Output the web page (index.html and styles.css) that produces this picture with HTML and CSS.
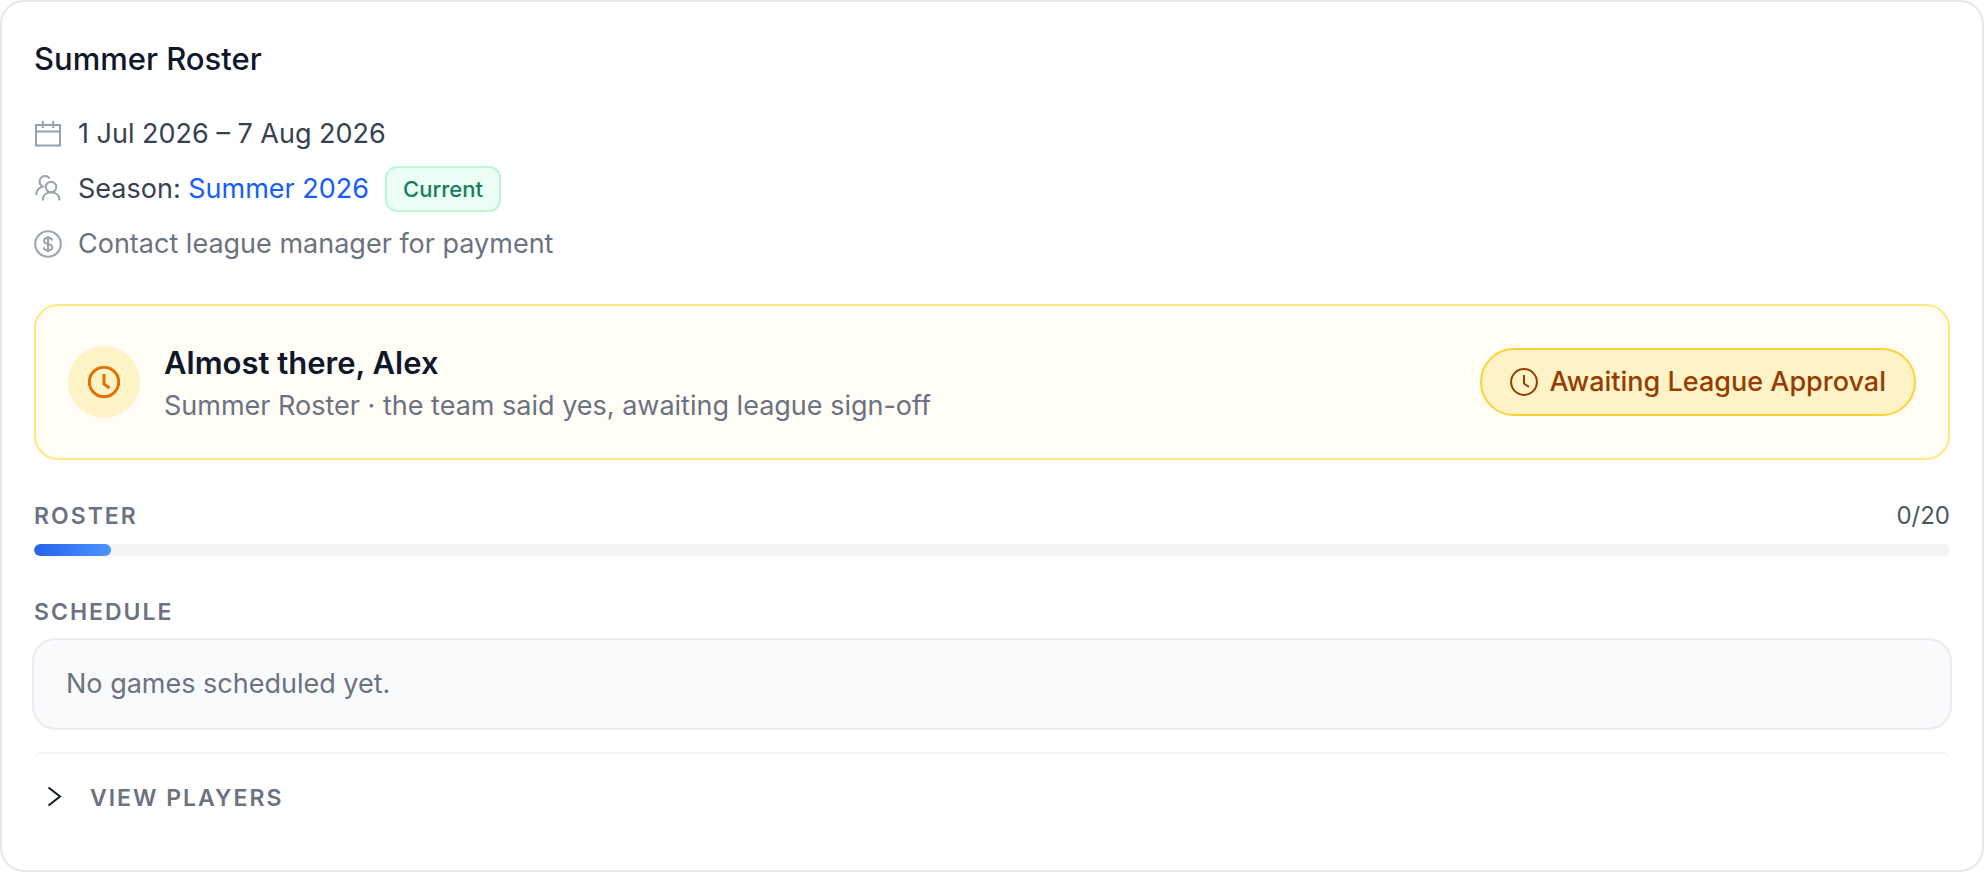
FILE: index.html
```html
<!DOCTYPE html>
<html lang="en">
<head>
<meta charset="utf-8">
<meta name="viewport" content="width=device-width, initial-scale=1">
<title>Summer Roster</title>
<link rel="stylesheet" href="styles.css">
</head>
<body>
<main class="card">
  <h1 class="card-title">Summer Roster</h1>

  <ul class="facts">
    <li class="fact">
      <svg class="fact-icon" viewBox="0 0 28 28" aria-hidden="true"><path d="M2 5H26V25.500H2ZM2 11.500H26M8.800 1V8M19.200 1V8"/></svg>
      <span>1 Jul 2026 – 7 Aug 2026</span>
    </li>
    <li class="fact">
      <svg class="fact-icon" viewBox="0 1 28 28" aria-hidden="true"><circle cx="17" cy="13" r="5.300"/><path d="M8.800 26.500C8.800 21.500 12 18.300 17 18.300S25.500 21.500 25.500 26.500M15.500 4.500C14.500 2.800 12.800 2 10.800 2C7.800 2 5.600 4.500 5.600 7.500C5.600 9.700 6.600 11.500 8.600 12.600C4.500 14 2.200 17 2.200 21"/></svg>
      <span>Season: <a class="season-link" href="#season">Summer 2026</a></span>
      <span class="badge">Current</span>
    </li>
    <li class="fact fact-muted">
      <svg class="fact-icon" viewBox="0 0 28 28" aria-hidden="true"><circle cx="14" cy="14" r="12.800"/><path d="M18 10.500C17.800 8.800 16.300 7.800 14 7.800S10 9 10 10.800C10 12.700 11.500 13.400 14 14S18.200 15.300 18.200 17.300S16.500 20.400 14 20.400S9.900 19.200 9.800 17.300M14 6V22.200"/></svg>
      <span>Contact league manager for payment</span>
    </li>
  </ul>

  <section class="banner">
    <span class="banner-mark">
      <svg class="mark-icon" viewBox="0 0 32 32" aria-hidden="true"><circle cx="16" cy="16" r="14.700"/><path d="M16 8V18L21.500 22"/></svg>
    </span>
    <div class="banner-text">
      <h2 class="banner-title">Almost there, Alex</h2>
      <p class="banner-note">Summer Roster · the team said yes, awaiting league sign-off</p>
    </div>
    <span class="pill">
      <svg class="pill-icon" viewBox="0 0 28 28" aria-hidden="true"><circle cx="14" cy="14" r="12.900"/><path d="M14 7V15.500L19 19"/></svg>
      Awaiting League Approval
    </span>
  </section>

  <section class="block">
    <div class="block-head">
      <h2 class="label" id="roster-label">Roster</h2>
      <span class="count">0/20</span>
    </div>
    <div class="meter" role="progressbar" aria-labelledby="roster-label" aria-valuemin="0" aria-valuemax="20" aria-valuenow="0">
      <div class="meter-fill" style="width: 4%"></div>
    </div>
  </section>

  <section class="block">
    <h2 class="label">Schedule</h2>
    <p class="empty">No games scheduled yet.</p>
  </section>

  <div class="players">
    <button class="players-toggle" type="button" aria-expanded="false">
      <svg class="chevron" viewBox="0 0 24 24" aria-hidden="true"><path d="M6.500 1.500L18 10.500L6.500 19.500"/></svg>
      <span class="label">View players</span>
    </button>
  </div>
</main>
</body>
</html>
```

FILE: styles.css
```css
* {
  box-sizing: border-box;
}

body {
  margin: 0;
  background: #fff;
  color: #0f172a;
  font-family: Inter, "Liberation Sans", sans-serif;
  font-size: 27px;
  line-height: 44px;
}

h1, h2, p, ul {
  margin: 0;
  padding: 0;
}

svg {
  flex: none;
  fill: none;
  stroke: currentColor;
  stroke-width: 2;
}

.card {
  padding: 32px 32px 30px;
  border: 2px solid #e5e7eb;
  border-radius: 24px;
}

.card-title {
  font-size: 31px;
  font-weight: 500;
  line-height: 50px;
}

.facts {
  display: flex;
  flex-direction: column;
  gap: 10px;
  margin: 28px 0 38px;
  list-style: none;
  color: #374151;
}

.fact {
  display: flex;
  align-items: center;
  gap: 16px;
}

.fact-muted {
  color: #6b7280;
}

.fact-icon {
  width: 28px;
  height: 28px;
  color: #98a2ae;
}

.season-link {
  color: #155dfc;
  text-decoration: none;
}

.badge {
  padding: 0 16px;
  border: 2px solid #bbf7d9;
  border-radius: 12px;
  background: #ecfdf5;
  color: #15805f;
  font-size: 22px;
  font-weight: 500;
  line-height: 42px;
}

.banner {
  display: flex;
  align-items: center;
  gap: 24px;
  padding: 33px 32px;
  border: 2px solid #fee685;
  border-radius: 24px;
  background: #fffdf5;
}

.banner-mark {
  display: grid;
  flex: none;
  place-items: center;
  width: 72px;
  height: 72px;
  border-radius: 50%;
  background: #fef3c6;
  color: #e17100;
}

.mark-icon {
  width: 32px;
  height: 32px;
  stroke-width: 3;
}

.banner-text {
  flex: 1;
}

.banner-title {
  font-size: 31px;
  font-weight: 600;
  line-height: 48px;
}

.banner-note {
  color: #6b7280;
  line-height: 38px;
}

.pill {
  display: flex;
  align-items: center;
  gap: 12px;
  padding: 10px 28px;
  border: 2px solid #ffd230;
  border-radius: 34px;
  background: #fef3c6;
  color: #973c00;
  font-weight: 500;
}

.pill-icon {
  width: 28px;
  height: 28px;
}

.block {
  margin-top: 36px;
}

.block-head {
  display: flex;
  justify-content: space-between;
  margin-bottom: 8px;
}

.label {
  color: #6b7280;
  font-size: 23px;
  font-weight: 600;
  line-height: 40px;
  letter-spacing: 2px;
  text-transform: uppercase;
}

.count {
  color: #4b5563;
  font-size: 24px;
  line-height: 40px;
}

.meter {
  height: 12px;
  overflow: hidden;
  border-radius: 6px;
  background: #f3f4f6;
}

.meter-fill {
  height: 100%;
  border-radius: 6px;
  background: linear-gradient(90deg, #2563eb, #4d94ff);
}

.empty {
  margin: 6px -2px 0;
  padding: 22px 32px;
  border: 2px solid #ebecf0;
  border-radius: 24px;
  background: #f9fafc;
  color: #6b7280;
}

.players {
  margin-top: 22px;
  border-top: 2px solid #f3f4f6;
  border-radius: 8px;
}

.players-toggle {
  display: flex;
  align-items: center;
  gap: 24px;
  width: 100%;
  padding: 24px 8px 22px;
  border: 0;
  background: none;
  color: #0f172a;
  font: inherit;
  text-align: left;
}

.chevron {
  width: 24px;
  height: 24px;
}
```
